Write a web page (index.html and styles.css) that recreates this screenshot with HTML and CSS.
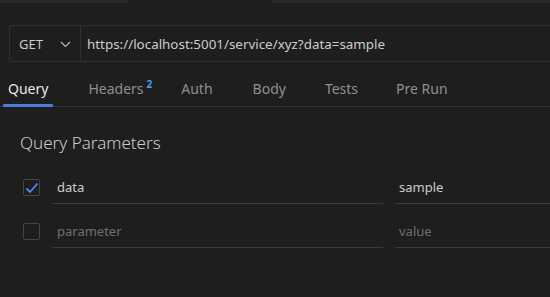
FILE: index.html
```html
<!DOCTYPE html>
<html lang="en">
<head>
    <meta charset="UTF-8">
    <title>Request</title>
    <link rel="stylesheet" href="styles.css">
</head>
<body>
    <div class="topstrip">
        <div class="strip strip-left"></div>
        <div class="strip-gap"></div>
        <div class="strip strip-right"></div>
    </div>

    <div class="request-bar">
        <div class="method">
            <span>GET</span>
            <svg class="chevron" width="11" height="7" viewBox="0 0 11 7">
                <path d="M1 1 L5.5 5.5 L10 1" fill="none" stroke="#bbbbbb" stroke-width="1.1"/>
            </svg>
        </div>
        <div class="url">https://localhost:5001/service/xyz?data=sample</div>
    </div>

    <div class="tabs">
        <div class="tab active">Query</div>
        <div class="tab">Headers<sup class="badge">2</sup></div>
        <div class="tab">Auth</div>
        <div class="tab">Body</div>
        <div class="tab">Tests</div>
        <div class="tab">Pre Run</div>
    </div>

    <div class="params">
        <h2>Query Parameters</h2>

        <div class="param-row">
            <div class="checkbox checked">
                <svg width="14" height="12" viewBox="0 0 14 12">
                    <path d="M1.5 6.5 L5 10 L12.5 1.5" fill="none" stroke="#4c8df0" stroke-width="1.8"/>
                </svg>
            </div>
            <div class="field name">data</div>
            <div class="field value">sample</div>
        </div>

        <div class="param-row">
            <div class="checkbox"></div>
            <div class="field name placeholder">parameter</div>
            <div class="field value placeholder">value</div>
        </div>
    </div>
</body>
</html>
```

FILE: styles.css
```css
body {
    margin: 0;
    background: #1e1e1e;
    color: #cccccc;
    font-family: "Noto Sans", "Open Sans", sans-serif;
    font-size: 13px;
    width: 550px;
    height: 297px;
    overflow: hidden;
}

.topstrip {
    display: flex;
    height: 3px;
}

.strip {
    background: #2a2a2a;
}

.strip-left {
    width: 128px;
}

.strip-gap {
    width: 144px;
}

.strip-right {
    flex: 1;
}

.request-bar {
    display: flex;
    margin: 22px 0 0 9px;
    height: 35px;
    border: 1px solid #303030;
    border-right: none;
    border-radius: 3px 0 0 3px;
}

.method {
    display: flex;
    align-items: center;
    justify-content: space-between;
    width: 52px;
    padding: 0 9px 0 9px;
    border-right: 1px solid #303030;
    color: #cccccc;
}

.chevron {
    margin-top: 1px;
}

.url {
    display: flex;
    align-items: center;
    padding-left: 6px;
    color: #cccccc;
    font-size: 13.4px;
    white-space: nowrap;
}

.tabs {
    display: flex;
    margin-top: 12px;
    height: 32px;
    border-bottom: 1px solid #333333;
}

.tab {
    position: relative;
    color: #8f8f8f;
    font-size: 14px;
    line-height: 30px;
}

.tab:nth-child(1) { margin-left: 8px; }
.tab:nth-child(2) { margin-left: 40px; }
.tab:nth-child(3) { margin-left: 29px; }
.tab:nth-child(4) { margin-left: 40px; }
.tab:nth-child(5) { margin-left: 39px; }
.tab:nth-child(6) { margin-left: 38px; }

.tab.active {
    color: #e6e6e6;
}

.tab.active::after {
    content: "";
    position: absolute;
    left: -5px;
    right: -5px;
    bottom: -1px;
    height: 3px;
    background: #4a7fd8;
    border-radius: 1px;
}

.badge {
    color: #4c9be8;
    font-size: 10px;
    font-weight: bold;
    margin-left: 3px;
    vertical-align: 6px;
    line-height: 0;
}

.params {
    padding: 0 0 0 20px;
}

.params h2 {
    margin: 19px 0 0 0;
    font-size: 17px;
    font-weight: 300;
    color: #cccccc;
    line-height: 34px;
}

.param-row {
    display: flex;
    align-items: flex-end;
    height: 44px;
}

.checkbox {
    width: 15px;
    height: 15px;
    border: 1px solid #444444;
    border-radius: 2px;
    margin: 0 12px 8px 3px;
    display: flex;
    align-items: center;
    justify-content: center;
}

.field {
    height: 32px;
    line-height: 32px;
    border-bottom: 1px solid #3a3a3a;
    color: #cccccc;
    padding-left: 5px;
}

.field.name {
    width: 326px;
}

.field.value {
    flex: 1;
    margin-left: 12px;
    padding-left: 4px;
}

.field.placeholder {
    color: #6f6f6f;
}
```
